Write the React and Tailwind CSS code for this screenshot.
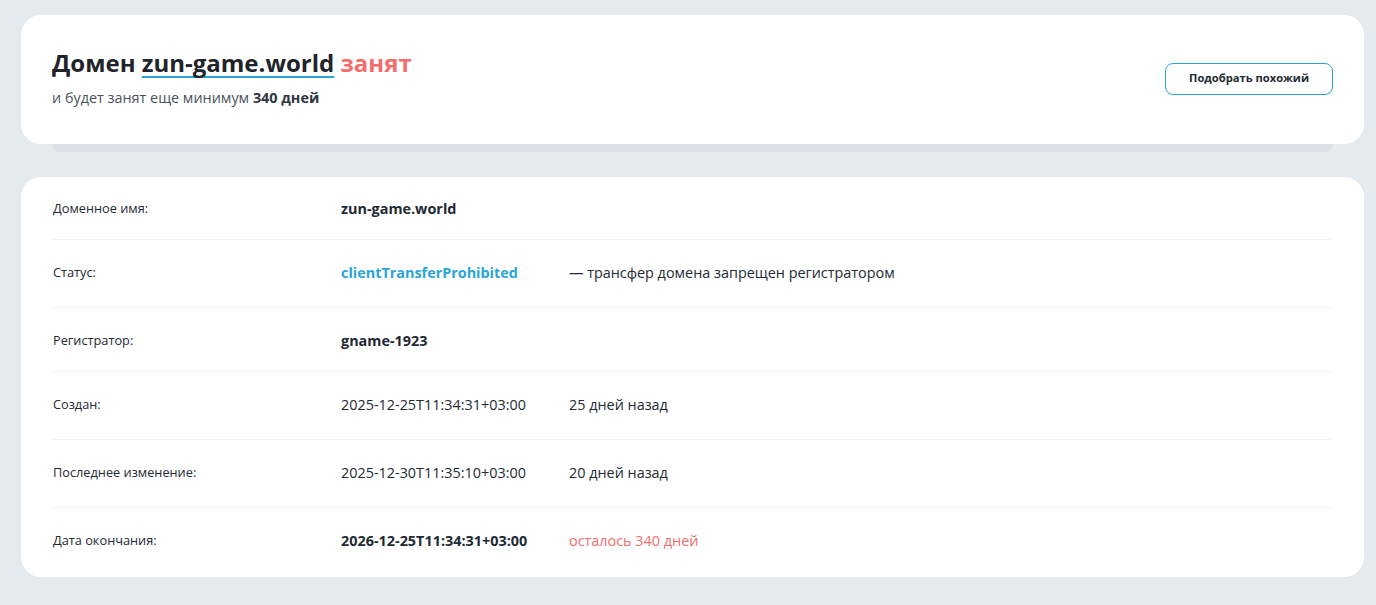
import React from 'react';

const rows = [
    { label: 'Доменное имя:', value: 'zun-game.world', valueClass: 'font-bold text-[#222a33]', h: 'h-[63px] pt-[2px]' },
    { label: 'Статус:', value: 'clientTransferProhibited', valueClass: 'font-bold text-[#2aa5d8]', note: '— трансфер домена запрещен регистратором', h: 'h-[68px] pb-[1px]' },
    { label: 'Регистратор:', value: 'gname-1923', valueClass: 'font-bold text-[#222a33]', h: 'h-[64px] pt-[2px]' },
    { label: 'Создан:', value: '2025-12-25T11:34:31+03:00', valueClass: 'text-[#222a33]', note: '25 дней назад', h: 'h-[68px] pb-[2px]' },
    { label: 'Последнее изменение:', value: '2025-12-30T11:35:10+03:00', valueClass: 'text-[#222a33]', note: '20 дней назад', h: 'h-[68px] pb-[1px]' },
    { label: 'Дата окончания:', value: '2026-12-25T11:34:31+03:00', valueClass: 'font-bold text-[#222a33]', note: 'осталось 340 дней', noteClass: 'text-[#f26d6d]', h: 'h-[69px] pb-[3px]', last: true },
];

const App = () => {
    return (
        <div className="min-h-[605px] bg-[#e5eaef] pl-[21px] pr-[12px] pt-[15px] pb-[28px] font-['Open_Sans',sans-serif] text-[#222a33]">
            {/* Header card */}
            <div>
                <div className="relative z-10 flex h-[129px] items-center justify-between rounded-[20px] bg-white pl-[31px] pr-[31px]">
                    <div className="-mt-[5px]">
                        <h1 className="text-[24px] font-bold leading-[32px] text-[#1f242b]">
                            Домен{' '}
                            <span className="underline decoration-[#2aa5d8] decoration-[1.5px] underline-offset-[4px] [text-decoration-skip-ink:none]">zun-game.world</span>{' '}
                            <span className="text-[#f26d6d]">занят</span>
                        </h1>
                        <p className="mt-[9px] text-[14.4px] leading-[20px] text-[#4a525c]">
                            и будет занят еще минимум <b className="text-[#2f363e]">340 дней</b>
                        </p>
                    </div>
                    <button className="-mt-[2px] h-[32px] w-[168px] rounded-[8px] border border-[#2aa5d8] bg-white text-[11.2px] font-bold text-[#222a33]">
                        Подобрать похожий
                    </button>
                </div>
                <div className="mx-[31px] h-[8px] rounded-b-[8px] bg-[#dbe1e7]" />
            </div>

            {/* Details card */}
            <div className="mt-[25px] rounded-[20px] bg-white px-[31px]">
                {rows.map((r) => (
                    <div
                        key={r.label}
                        className={`flex items-center ${r.h} ${r.last ? '' : 'border-b border-[#f0f2f4]'}`}
                    >
                        <div className="w-[289px] pl-[1px] text-[12.75px] text-[#222a33]">{r.label}</div>
                        <div className={`w-[228px] text-[14.4px] ${r.valueClass}`}>{r.value}</div>
                        <div className={`text-[14.4px] ${r.noteClass || 'text-[#222a33]'}`}>{r.note}</div>
                    </div>
                ))}
            </div>
        </div>
    );
};

export default App;
